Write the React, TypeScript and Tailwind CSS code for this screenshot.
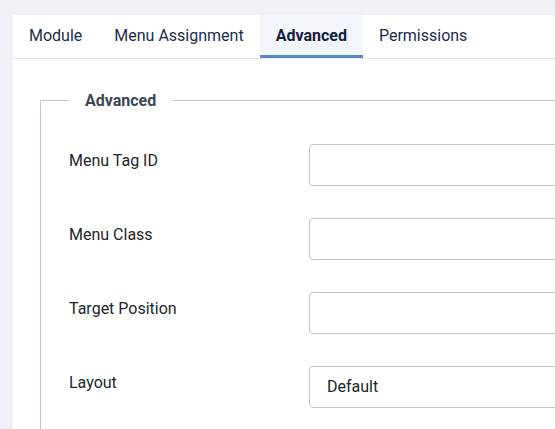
import React from 'react';

const tabs = ['Module', 'Menu Assignment', 'Advanced', 'Permissions'];

const fields = [
  { label: 'Menu Tag ID', value: '' },
  { label: 'Menu Class', value: '' },
  { label: 'Target Position', value: '' },
  { label: 'Layout', value: 'Default' },
];

export default function App() {
  return (
    <div className="min-h-screen w-full overflow-hidden bg-[#eef2f6] pt-[15px] pl-[13px] font-['Roboto',sans-serif]">
      <div className="w-[900px] min-h-[420px] bg-white">
        <div className="flex border-b border-[#dfe6ef]">
          {tabs.map((tab) => (
            <div
              key={tab}
              className={`h-[43px] px-4 pt-[2px] flex items-center text-base border-b-[3px] ${
                tab === 'Advanced'
                  ? 'bg-[#f2f6fa] border-[#5a87c4] font-bold text-[#14213d]'
                  : 'border-transparent text-[#1c2c4c]'
              }`}
            >
              {tab}
            </div>
          ))}
        </div>

        <div className="px-[27px] pt-[29px]">
          <fieldset className="border border-[#b8c8df] pl-[28px] pt-[32px] pb-8">
            <legend className="relative top-px px-4 text-base leading-6 font-bold text-[#3c4656]">Advanced</legend>
            <div className="flex flex-col gap-[32px]">
              {fields.map((field) => (
                <div key={field.label} className="flex">
                  <div className="w-[240px] pt-[5px] text-base leading-6 text-[#22262a]">{field.label}</div>
                  <div className="flex-1 h-[42px] rounded-[4px] border border-[#bac7d8] bg-white px-[17px] flex items-center text-base text-[#22262a]">
                    {field.value}
                  </div>
                </div>
              ))}
            </div>
          </fieldset>
        </div>
      </div>
    </div>
  );
}
